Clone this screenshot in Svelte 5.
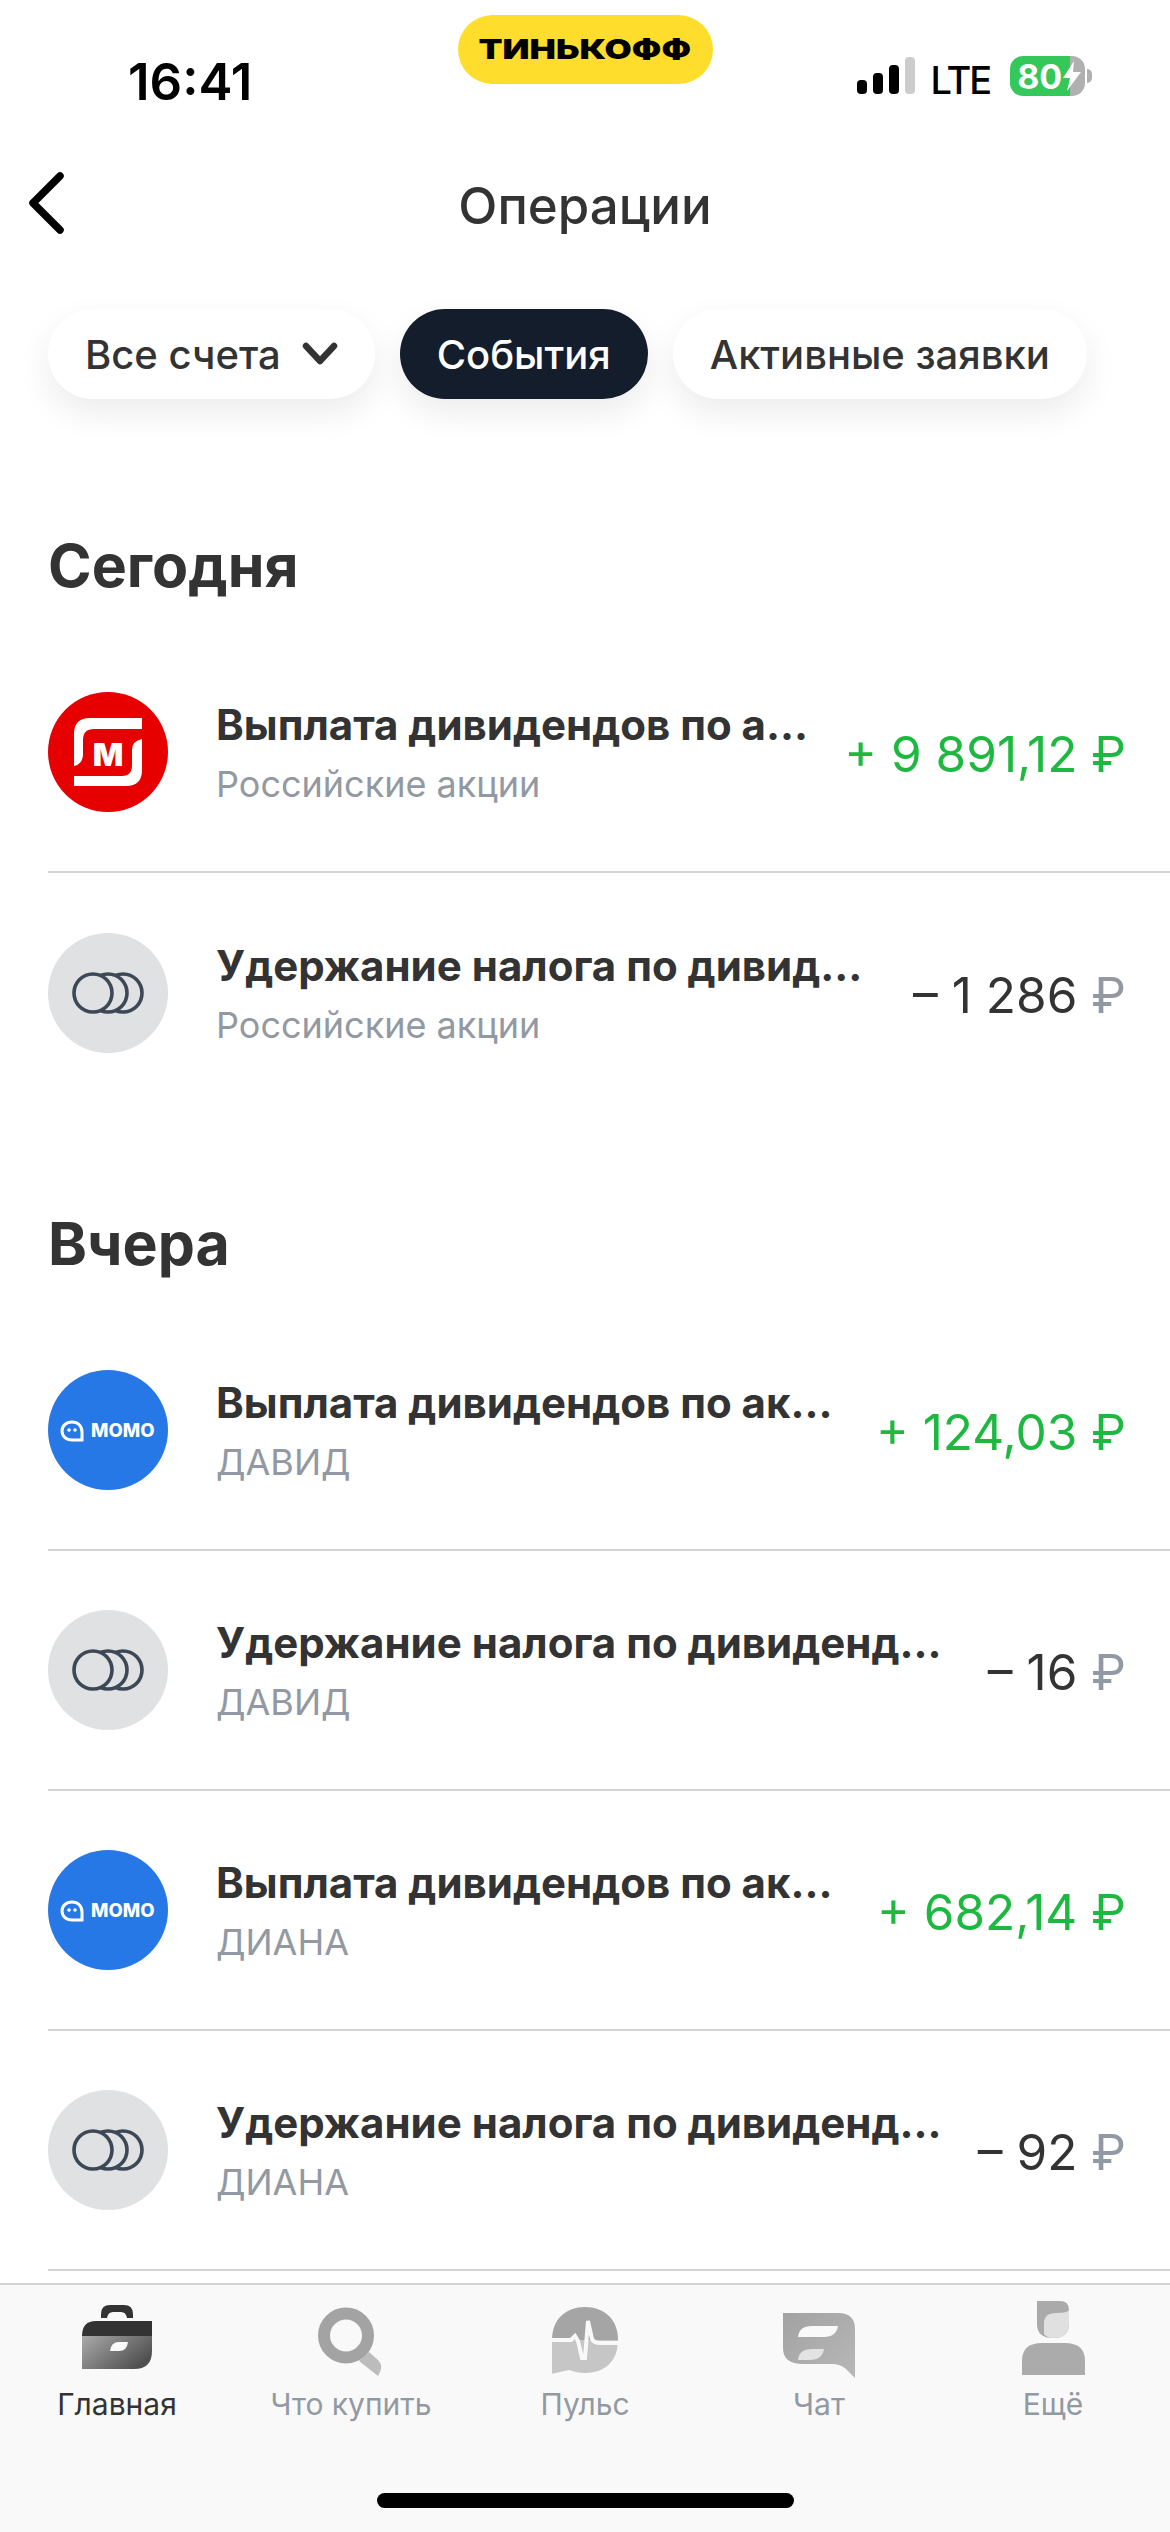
<script>
  const sections = [
    {
      title: 'Сегодня',
      closed: true,
      rows: [
        { logo: 'magnit', name: 'Выплата дивидендов по а...', sub: 'Российские акции', sign: '+', sum: '9 891,12', income: true },
        { logo: 'coins', name: 'Удержание налога по дивид...', sub: 'Российские акции', sign: '–', sum: '1 286' }
      ]
    },
    {
      title: 'Вчера',
      closed: false,
      rows: [
        { logo: 'momo', name: 'Выплата дивидендов по ак...', sub: 'ДАВИД', sign: '+', sum: '124,03', income: true },
        { logo: 'coins', name: 'Удержание налога по дивиденд...', sub: 'ДАВИД', sign: '–', sum: '16' },
        { logo: 'momo', name: 'Выплата дивидендов по ак...', sub: 'ДИАНА', sign: '+', sum: '682,14', income: true },
        { logo: 'coins', name: 'Удержание налога по дивиденд...', sub: 'ДИАНА', sign: '–', sum: '92' }
      ]
    }
  ]

  const tabs = [
    { id: 'home', label: 'Главная', active: true },
    { id: 'search', label: 'Что купить' },
    { id: 'pulse', label: 'Пульс' },
    { id: 'chat', label: 'Чат' },
    { id: 'more', label: 'Ещё' }
  ]
</script>

{#snippet logo(kind)}
  {#if kind === 'magnit'}
    <svg class="logo" viewBox="0 0 120 120">
      <circle cx="60" cy="60" r="60" fill="#e60000" />
      <path fill="#fff" d="M94 26V37H46Q35 37 35 48V62Q35 72 26 74V42Q26 26 42 26Z" />
      <path fill="#fff" d="M26 94V84H74Q84 84 84 73V58Q84 49 94 47V78Q94 94 78 94Z" />
      <text class="mm" x="60" y="74" text-anchor="middle">М</text>
    </svg>
  {:else if kind === 'momo'}
    <svg class="logo" viewBox="0 0 120 120">
      <circle cx="60" cy="60" r="60" fill="#2578e6" />
      <path fill="none" stroke="#fff" stroke-width="3" d="M24 52C30 52 34 56 34 62V70H24C18 70 14 66 14 61C14 56 18 52 24 52Z" />
      <circle cx="21" cy="60" r="1.8" fill="#fff" />
      <circle cx="27" cy="60" r="1.8" fill="#fff" />
      <text class="momo" x="43" y="67">MOMO</text>
    </svg>
  {:else}
    <svg class="logo" viewBox="0 0 120 120">
      <circle cx="60" cy="60" r="60" fill="#dfe1e3" />
      <g fill="#dfe1e3" stroke="#3d4856" stroke-width="3.6">
        <circle cx="75" cy="60" r="19" />
        <circle cx="60" cy="60" r="19" />
        <circle cx="45" cy="60" r="19" />
      </g>
    </svg>
  {/if}
{/snippet}

{#snippet tabIcon(id)}
  {#if id === 'home'}
    <svg class="ic-home" width="70" height="64" viewBox="0 0 70 64">
      <defs>
        <linearGradient id="case" x1="0" y1="0" x2="1" y2="0.6">
          <stop offset="0" stop-color="#aaa" />
          <stop offset="1" stop-color="#505050" />
        </linearGradient>
      </defs>
      <path fill="#333" d="M19 13V9Q19 0 28 0H42Q51 0 51 9V13H45Q44 7 39 7H31Q26 7 25 13Z" />
      <path fill="#333" d="M0 31Q0 16 14 16H70V31Z" />
      <path fill="url(#case)" d="M0 31H70V46Q70 64 52 64H0Z" />
      <path fill="#f9f9f9" d="M28 46Q29 37 37 37H46Q45 46 37 46Z" />
    </svg>
  {:else if id === 'search'}
    <svg class="ic-search" width="66" height="70" viewBox="0 0 66 70">
      <path fill="#bcbcbc" d="M51 45L60 53Q65 58 62 65L60 69L41 54Z" />
      <circle cx="28" cy="28.5" r="22" fill="none" stroke="#a3a3a3" stroke-width="12" />
    </svg>
  {:else if id === 'pulse'}
    <svg class="ic-pulse" width="66" height="67" viewBox="0 0 66 67">
      <path fill="#a5a5a5" d="M0 33C0 12 14 0 33 0C52 0 66 12 66 33Z" />
      <path fill="#c6c6c6" d="M0 33H66C66 55 52 66 33 66C27 66 23 65 17 63L0 66.7Z" />
      <path fill="none" stroke="#f9f9f9" stroke-width="4" d="M0 33H19L23 29L26 34L30 51H33L36 14L40 32Q42 36 48 36H66" />
    </svg>
  {:else if id === 'chat'}
    <svg class="ic-chat" width="72" height="65" viewBox="0 0 72 65">
      <defs>
        <linearGradient id="bubble" x1="0" y1="0" x2="1" y2="1">
          <stop offset="0" stop-color="#a2a2a2" />
          <stop offset="1" stop-color="#b8b8b8" />
        </linearGradient>
      </defs>
      <path fill="url(#bubble)" d="M0 0H55Q72 0 72 16V65L63 56Q57 51 49 51H20Q0 51 0 35Z" />
      <path fill="#f9f9f9" d="M15 24Q16 13 29 13H55Q53 24 41 24Z" />
      <path fill="#e3e3e3" d="M15 47Q16 36 29 36H41Q39 47 27 47Z" />
    </svg>
  {:else}
    <svg class="ic-more" width="63" height="74" viewBox="0 0 63 74">
      <path fill="#aaa" d="M15 0H38Q47 0 47 9V23Q47 37 31 37Q15 37 15 23Z" />
      <path fill="#e0e0e0" d="M47 9Q46 12 34 12Q22 12 22 22V33Q25 37 31 37Q47 37 47 23Z" />
      <path fill="#ababab" d="M0 74V60Q0 42 20 42H43Q63 42 63 60V74Z" />
    </svg>
  {/if}
{/snippet}

<div class="screen">
  <div class="status">
    <span class="time">16:41</span>
    <div class="bank"><span>ТИНЬКОФФ</span></div>
    <div class="indicators">
      <svg width="58" height="38" viewBox="0 0 58 38">
        <rect x="0" y="23" width="10" height="14" rx="4" fill="#000" />
        <rect x="16" y="16" width="10" height="21" rx="4" fill="#000" />
        <rect x="32" y="8" width="10" height="29" rx="4" fill="#000" />
        <rect x="48" y="0" width="10" height="37" rx="4" fill="#ccc" />
      </svg>
      <span class="net">LTE</span>
      <div class="battery">
        <span class="level">80</span>
        <svg class="bolt" width="18" height="30" viewBox="0 0 18 30">
          <path fill="#fff" d="M11 0L0 17H7L4 30L18 11H10Z" />
        </svg>
      </div>
      <span class="nub"></span>
    </div>
  </div>

  <header class="top">
    <svg class="back" width="36" height="62" viewBox="0 0 36 62">
      <path fill="none" stroke="#000" stroke-width="7.5" stroke-linecap="round" stroke-linejoin="round" d="M32 4L5 31L32 58" />
    </svg>
    <h1>Операции</h1>
  </header>

  <div class="chips">
    <button class="chip">
      Все счета
      <svg width="36" height="24" viewBox="0 0 36 24">
        <path fill="none" stroke="#333" stroke-width="6.5" stroke-linecap="round" stroke-linejoin="round" d="M4 4L18 19L32 4" />
      </svg>
    </button>
    <button class="chip selected">События</button>
    <button class="chip">Активные заявки</button>
  </div>

  <main>
    {#each sections as section}
      <section>
        <h2>{section.title}</h2>
        <ul class:closed={section.closed}>
          {#each section.rows as row}
            <li>
              {@render logo(row.logo)}
              <div class="info">
                <span class="name">{row.name}</span>
                <span class="sub">{row.sub}</span>
              </div>
              <span class="sum" class:income={row.income}>{row.sign} {row.sum} <i>₽</i></span>
            </li>
          {/each}
        </ul>
      </section>
    {/each}
  </main>

  <nav>
    <div class="tabs">
      {#each tabs as tab}
        <div class="tab" class:active={tab.active}>
          <div class="tab-icon">{@render tabIcon(tab.id)}</div>
          <span>{tab.label}</span>
        </div>
      {/each}
    </div>
    <div class="home-bar"></div>
  </nav>
</div>

<style>
  :global(body) {
    margin: 0;
    background: #fff;
  }

  .screen {
    width: 1170px;
    height: 2532px;
    display: flex;
    flex-direction: column;
    overflow: hidden;
    font-family: Inter, 'Noto Sans', sans-serif;
    color: #333;
  }

  /* status bar */
  .status {
    height: 130px;
    display: grid;
    grid-template-columns: 1fr auto 1fr;
    box-sizing: border-box;
    padding-top: 15px;
  }
  .time {
    justify-self: start;
    margin: 37px 0 0 128px;
    font-size: 51px;
    line-height: 60px;
    font-weight: 600;
    color: #000;
  }
  .bank {
    width: 255px;
    height: 69px;
    border-radius: 35px;
    background: #ffdd2d;
    color: #000;
    font-size: 27px;
    font-weight: 900;
    line-height: 69px;
    text-align: center;
  }
  .bank span {
    display: inline-block;
    transform: scaleX(1.3);
  }
  .indicators {
    display: flex;
    align-items: flex-start;
    padding: 42px 0 0 144px;
  }
  .net {
    margin: 1px 0 0 16px;
    font-size: 38px;
    line-height: 44px;
    font-weight: 500;
    letter-spacing: -2px;
    color: #000;
  }
  .battery {
    margin: -1px 0 0 20px;
    width: 75px;
    height: 40px;
    box-sizing: border-box;
    border-radius: 13px;
    background: linear-gradient(90deg, #34c759 80%, #b0b0b0 80%);
    display: flex;
    align-items: center;
    padding-left: 7px;
    color: #fff;
  }
  .level {
    font-size: 34px;
    font-weight: 700;
  }
  .bolt {
    margin-left: 1px;
  }
  .nub {
    width: 5px;
    height: 14px;
    margin: 12px 0 0 2px;
    border-radius: 0 7px 7px 0;
    background: #b0b0b0;
  }

  /* title */
  .top {
    height: 152px;
    position: relative;
    display: flex;
    justify-content: center;
    align-items: center;
    margin-bottom: 27px;
  }
  .back {
    position: absolute;
    left: 28px;
    top: 42px;
  }
  h1 {
    margin: 0;
    font-size: 51px;
    font-weight: 500;
    line-height: 60px;
    color: #333;
  }

  /* filters */
  .chips {
    display: flex;
    gap: 25px;
    padding-left: 48px;
  }
  .chip {
    height: 90px;
    padding: 0 37px;
    border: 0;
    border-radius: 45px;
    background: #fff;
    color: #333;
    font: 500 40px Inter, 'Noto Sans', sans-serif;
    display: flex;
    align-items: center;
    gap: 21px;
    box-shadow: 0 14px 34px rgba(0, 0, 0, 0.08);
  }
  .chip.selected {
    background: #141d2b;
    color: #fff;
  }

  /* operations */
  main {
    flex: 1;
    min-height: 0;
    overflow: hidden;
    padding: 127px 0 0 48px;
  }
  section + section {
    margin-top: 91px;
  }
  h2 {
    margin: 0 0 27px;
    font-size: 59px;
    line-height: 80px;
    font-weight: 700;
    color: #333;
  }
  ul {
    list-style: none;
    margin: 0;
    padding: 0;
  }
  li {
    height: 240px;
    box-sizing: border-box;
    display: flex;
    align-items: center;
    border-bottom: 2px solid #d2d3d5;
    padding-right: 44px;
  }
  ul.closed li:last-child {
    border-bottom: 0;
  }
  .logo {
    width: 120px;
    height: 120px;
    flex-shrink: 0;
    margin-right: 48px;
  }
  .mm {
    font: 900 32px Inter, sans-serif;
    fill: #fff;
  }
  .momo {
    font: 800 18.5px Inter, sans-serif;
    fill: #fff;
  }
  .info {
    flex: 1;
    min-width: 0;
    display: flex;
    flex-direction: column;
    gap: 9px;
  }
  .name {
    font-size: 42px;
    line-height: 54px;
    font-weight: 700;
    color: #333;
    white-space: nowrap;
  }
  .sub {
    font-size: 36px;
    line-height: 46px;
    color: #9299a2;
  }
  .sum {
    padding-top: 3px;
    font-size: 49.5px;
    line-height: 60px;
    color: #333;
    white-space: pre;
    flex-shrink: 0;
  }
  .sum i {
    font-style: normal;
    color: #9299a2;
  }
  .sum.income,
  .sum.income i {
    color: #1db83f;
  }

  /* bottom navigation */
  nav {
    height: 249px;
    flex-shrink: 0;
    box-sizing: border-box;
    border-top: 2px solid #d2d3d5;
    background: #f9f9f9;
    position: relative;
  }
  .tabs {
    display: grid;
    grid-template-columns: repeat(5, 1fr);
  }
  .tab {
    display: flex;
    flex-direction: column;
    align-items: center;
    color: #9299a2;
    font-size: 30px;
    line-height: 40px;
  }
  .tab.active {
    color: #333;
  }
  .tab-icon {
    height: 99px;
    display: flex;
    align-items: flex-start;
    justify-content: center;
  }
  .ic-home { margin-top: 20px; }
  .ic-search { margin-top: 22px; }
  .ic-pulse { margin-top: 22px; }
  .ic-chat { margin-top: 28px; }
  .ic-more { margin-top: 16px; }
  .home-bar {
    position: absolute;
    left: 377px;
    bottom: 24px;
    width: 417px;
    height: 15px;
    border-radius: 8px;
    background: #000;
  }
</style>
